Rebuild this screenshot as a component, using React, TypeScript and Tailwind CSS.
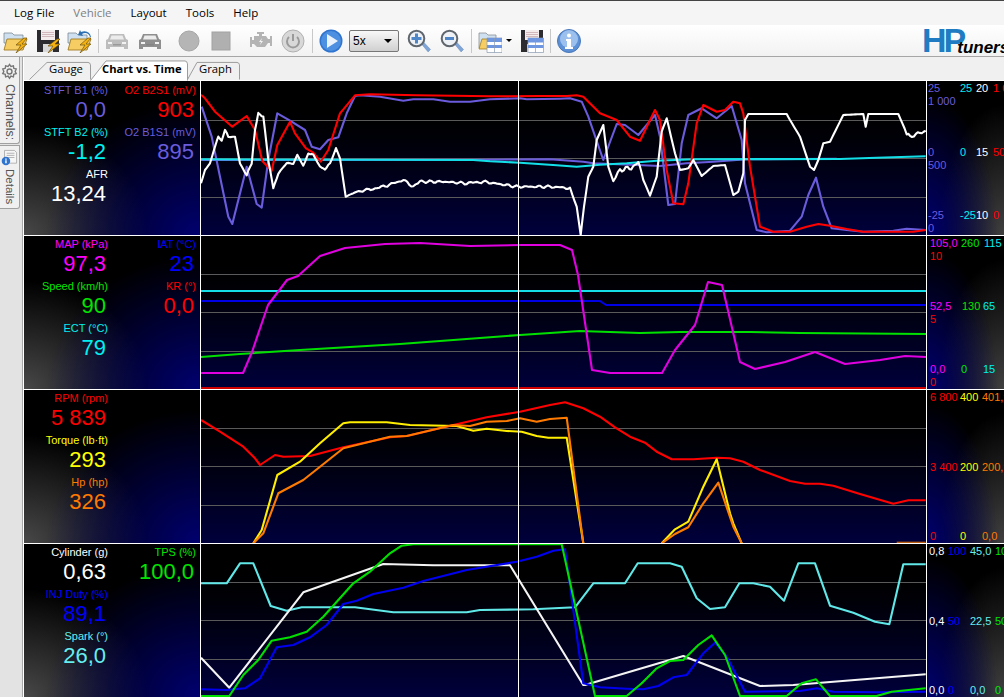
import React from 'react';

type Pt = [number, number];

// points were read off 3x crops, so they are divided back down here
const z = (ox: number, oy: number, pts: Pt[]): Pt[] => pts.map(([x, y]) => [ox + x / 3, oy + y / 3]);
const line = (pts: Pt[]) => pts.map(([x, y]) => `${x.toFixed(1)},${y.toFixed(1)}`).join(' ');

// the AFR trace is noisy, add a stable wobble
function rough(pts: Pt[]): Pt[] {
  const out: Pt[] = [];
  for (let i = 0; i < pts.length - 1; i++) {
    const [x0, y0] = pts[i];
    const [x1, y1] = pts[i + 1];
    const steps = Math.max(1, Math.round((x1 - x0) / 2));
    for (let s = 0; s < steps; s++) {
      const x = x0 + ((x1 - x0) * s) / steps;
      const y = y0 + ((y1 - y0) * s) / steps;
      let amp = 0;
      if (x > 346 && x < 572) amp = 1.4;
      else if (x > 215 && x < 340) amp = 0.7;
      else if (x > 610 && x < 640) amp = 2.2;
      else if (x > 905) amp = 1.6;
      out.push([x, y + amp * Math.sin(x * 1.7) * Math.cos(x * 0.9)]);
    }
  }
  out.push(pts[pts.length - 1]);
  return out;
}

const VIOLET = '#6a5cdc';
const row1 = [
  {
    c: VIOLET,
    p: [...z(200, 80, [[5, 80], [35, 170], [60, 290], [85, 410], [97, 432], [140, 260], [170, 372], [185, 383], [205, 240], [232, 100], [270, 122], [315, 150], [335, 200], [360, 208], [385, 180], [415, 172], [440, 100], [465, 48], [480, 46], [540, 50], [610, 62], [640, 58], [700, 58], [750, 65], [810, 65], [870, 58], [960, 55], [980, 58], [1080, 56]]),
      ...z(560, 80, [[30, 55], [65, 65], [85, 110], [130, 240], [170, 132], [195, 135], [235, 165], [285, 105], [300, 170], [325, 375], [345, 372], [365, 190], [385, 105], [425, 85], [470, 115], [515, 78], [545, 180], [555, 310], [590, 450], [620, 457], [690, 452], [725, 410], [745, 345], [768, 293], [790, 380], [815, 445], [860, 450], [910, 455], [1000, 452], [1040, 446], [1097, 450]])],
  },
  {
    c: VIOLET,
    p: [...z(200, 80, [[0, 240], [820, 239], [1050, 238], [1150, 245]]), ...z(560, 80, [[100, 250], [230, 255], [300, 258], [380, 250], [460, 245], [560, 238], [830, 236]])],
  },
  {
    c: '#12dfe8',
    p: [...z(200, 80, [[0, 238], [820, 240], [870, 244], [960, 248], [1070, 256], [1130, 260], [1200, 254]]), ...z(560, 80, [[200, 250], [290, 242], [400, 238], [840, 237], [950, 233], [1097, 229]])],
  },
  {
    c: '#ff0000',
    p: [...z(200, 80, [[3, 44], [15, 55], [45, 95], [97, 140], [140, 108], [165, 150], [187, 243], [215, 272], [232, 195], [270, 125], [285, 160], [318, 205], [340, 218], [362, 245], [385, 210], [420, 100], [465, 46], [510, 43], [650, 46], [870, 49], [1020, 48], [1100, 48]]), ...z(560, 80, [[50, 46], [70, 50], [120, 100], [170, 120], [210, 170], [240, 182], [285, 90], [300, 120], [320, 270], [340, 370], [370, 373], [385, 310], [410, 130], [430, 75], [470, 95], [495, 90], [520, 65], [540, 70], [550, 100], [570, 260], [600, 440], [640, 455], [690, 455], [740, 440], [775, 432], [810, 437], [860, 447], [910, 455], [1060, 455], [1097, 450]])],
  },
  {
    c: '#ffffff',
    p: rough([...z(200, 80, [[3, 310], [15, 270], [30, 250], [45, 200], [55, 170], [65, 182], [75, 150], [85, 170], [105, 170], [120, 250], [140, 285], [155, 250], [165, 150], [175, 100], [190, 110], [205, 240], [220, 325], [235, 280], [260, 250], [280, 250], [292, 225], [310, 258], [325, 220], [340, 225], [360, 260], [375, 268], [390, 250], [408, 205], [420, 235], [437, 350], [470, 335], [500, 330], [550, 320], [610, 300], [640, 320], [660, 305], [730, 305], [800, 310], [850, 305], [950, 320], [1050, 320], [1080, 322]]), ...z(560, 80, [[30, 325], [50, 380], [62, 465], [72, 380], [85, 290], [100, 260], [110, 180], [130, 135], [145, 260], [160, 305], [180, 270], [225, 260], [235, 240], [250, 300], [270, 347], [290, 290], [305, 155], [320, 115], [345, 220], [360, 270], [385, 265], [400, 240], [425, 288], [460, 258], [495, 255], [520, 345], [535, 335], [550, 280], [555, 120], [565, 102], [680, 102], [690, 120], [720, 170], [750, 260], [762, 270], [775, 240], [790, 190], [810, 185], [850, 105], [910, 102], [917, 140], [925, 102], [1015, 102], [1040, 160], [1050, 170], [1097, 152]])]),
  },
];

const row2 = [
  { c: '#14dfe8', p: [[201, 291], [926, 291]] as Pt[] },
  { c: '#0000e6', p: [[201, 301], [600, 301], [606, 305], [926, 305]] as Pt[] },
  { c: '#00e000', p: [[201, 357], [240, 354], [300, 350], [400, 344], [520, 335], [580, 331], [640, 333], [680, 332], [750, 332], [800, 333], [926, 334]] as Pt[] },
  { c: '#e000e0', p: [[201, 373], [243, 373], [252, 352], [268, 305], [287, 280], [298, 276], [320, 256], [345, 248], [385, 244], [420, 243], [470, 246], [520, 245], [560, 245], [572, 250], [578, 275], [592, 370], [610, 373], [662, 373], [675, 350], [695, 325], [708, 282], [722, 285], [740, 362], [755, 369], [785, 362], [815, 352], [845, 364], [880, 360], [905, 356], [926, 357]] as Pt[] },
  { c: '#d00000', p: [[201, 388], [926, 388]] as Pt[] },
];

const row3 = [
  { c: '#ff0000', p: [...z(200, 390, [[3, 90], [60, 125], [130, 170], [165, 205], [180, 225], [225, 195], [250, 200], [330, 198], [430, 172], [570, 142], [620, 138], [760, 105], [860, 82], [960, 65], [1050, 45], [1095, 37], [1150, 55]]), ...z(560, 390, [[120, 80], [165, 112], [210, 140], [255, 158], [290, 185], [335, 208], [400, 208], [470, 203], [510, 205], [550, 215], [600, 240], [690, 273], [735, 281], [780, 281], [820, 287], [900, 312], [1000, 341], [1045, 331], [1097, 331]])] },
  { c: '#ffee00', p: z(200, 390, [[160, 460], [185, 420], [205, 350], [232, 255], [300, 215], [360, 160], [430, 100], [450, 97], [510, 97], [560, 97], [630, 105], [770, 108], [820, 122], [860, 116], [920, 123], [965, 125], [1010, 138], [1045, 143], [1100, 143], [1150, 460]]) },
  { c: '#ff7b00', p: z(200, 390, [[160, 460], [190, 430], [235, 310], [310, 270], [360, 230], [430, 175], [570, 140], [620, 138], [760, 105], [810, 108], [860, 95], [920, 93], [960, 85], [1010, 95], [1050, 87], [1100, 83], [1150, 460]]) },
  { c: '#ffee00', p: z(560, 390, [[305, 460], [345, 418], [385, 395], [430, 290], [470, 208], [510, 370], [520, 400], [545, 460]]) },
  { c: '#ff7b00', p: z(560, 390, [[305, 460], [345, 432], [385, 412], [430, 340], [475, 278], [520, 410], [545, 460]]) },
  { c: '#b85c10', p: z(560, 390, [[1010, 458], [1097, 458]]) },
];

const row4 = [
  { c: '#60e8e8', p: [...z(200, 390, [[3, 580], [80, 580], [120, 520], [160, 520], [212, 648], [260, 662], [305, 652], [465, 652], [580, 667], [800, 667], [840, 660], [1000, 658], [1125, 652]]), ...z(560, 390, [[45, 652], [100, 580], [195, 580], [233, 520], [330, 520], [365, 530], [410, 625], [450, 657], [495, 652], [538, 580], [580, 580], [630, 590], [672, 632], [715, 520], [765, 520], [810, 647], [880, 668], [945, 695], [988, 703], [1030, 523], [1097, 523]])] },
  { c: '#f4f4f4', p: [...z(200, 390, [[3, 803], [88, 893], [310, 607], [550, 522], [700, 526], [930, 526], [1150, 885]]), ...z(560, 390, [[75, 885], [370, 798], [600, 888], [700, 885], [1097, 853]])] },
  { c: '#0000f0', p: [...z(200, 390, [[3, 898], [80, 900], [135, 895], [180, 865], [230, 772], [280, 765], [330, 742], [380, 705], [430, 642], [470, 632], [520, 612], [610, 593], [670, 573], [800, 540], [950, 515], [1010, 500], [1060, 482], [1095, 478], [1150, 880]]), ...z(560, 390, [[120, 892], [200, 896], [250, 898], [295, 888], [340, 862], [380, 855], [430, 790], [465, 758], [500, 800], [555, 905], [720, 903], [770, 895], [820, 905], [950, 907], [1097, 905]])] },
  { c: '#00e000', p: [...z(200, 390, [[3, 918], [88, 918], [130, 855], [175, 810], [215, 752], [270, 742], [320, 725], [370, 680], [460, 580], [510, 545], [570, 490], [605, 467], [640, 463], [1085, 463]]), ...z(560, 390, [[105, 918], [200, 918], [245, 880], [290, 835], [330, 813], [370, 810], [415, 765], [455, 736], [495, 795], [540, 918], [680, 918], [725, 880], [768, 868], [810, 918], [950, 918], [995, 905], [1097, 895]])] },
];

function Chart({ top, h, grid, traces }: { top: number; h: number; grid: number[]; traces: { c: string; p: Pt[] }[] }) {
  return (
    <div className="w-[726px] shrink-0 bg-gradient-to-b from-black to-[#00003c]">
      <svg className="block" width={725} height={h} viewBox={`201 ${top} 725 ${h}`}>
        {grid.map((y) => (
          <line key={y} x1={201} x2={926} y1={y + 0.5} y2={y + 0.5} stroke="#5a5a5a" strokeWidth={1} />
        ))}
        {traces.map((t, i) => (
          <polyline key={i} points={line(t.p)} fill="none" stroke={t.c} strokeWidth={2.1} strokeLinejoin="round" />
        ))}
        <line x1={518.5} x2={518.5} y1={top} y2={top + h} stroke="#fff" strokeWidth={1} />
      </svg>
    </div>
  );
}

function Reading({ label, value, color }: { label: string; value: string; color: string }) {
  return (
    <div className="mb-[2px] flex flex-col items-end whitespace-nowrap" style={{ color }}>
      <span className="h-[16px] text-[11px] leading-[16px]">{label}</span>
      <span className="h-[24px] pr-[2px] text-[22px] leading-[24px]">{value}</span>
    </div>
  );
}

const panelBg =
  'bg-black bg-[radial-gradient(ellipse_at_100%_100%,#000070,transparent_62%),radial-gradient(ellipse_at_0%_100%,#484848,transparent_50%)]';
const axisBg =
  'bg-black bg-[radial-gradient(ellipse_at_0%_100%,#000070,transparent_65%),radial-gradient(ellipse_at_100%_100%,#404040,transparent_60%)]';

function Readings({ left, right, first }: { left: [string, string, string][]; right: [string, string, string][]; first?: boolean }) {
  return (
    <div className={`flex w-[177px] shrink-0 ${panelBg} ${first ? 'pt-px' : ''}`}>
      <div className="w-[84px]">
        {left.map(([l, v, c]) => (
          <Reading key={l} label={l} value={v} color={c} />
        ))}
      </div>
      <div className="w-[88px]">
        {right.map(([l, v, c]) => (
          <Reading key={l} label={l} value={v} color={c} />
        ))}
      </div>
    </div>
  );
}

// one line of an axis: [text, colour, width]
function AxisLine({ items }: { items: [string, string, string][] }) {
  return (
    <div className="flex h-[13px] whitespace-nowrap text-[11px] leading-[13px]">
      {items.map(([t, c, w], i) => (
        <span key={i} className={`shrink-0 ${w}`} style={{ color: c }}>
          {t}
        </span>
      ))}
    </div>
  );
}

function Axis({ groups, pad }: { groups: [string, string, string][][][]; pad: string }) {
  return (
    <div className={`flex w-[77px] shrink-0 flex-col justify-between overflow-hidden pt-px ${pad} ${axisBg}`}>
      {groups.map((g, i) => (
        <div key={i}>
          {g.map((items, j) => (
            <AxisLine key={j} items={items} />
          ))}
        </div>
      ))}
    </div>
  );
}

function Row({ children, h }: { children: React.ReactNode; h: string }) {
  return <div className={`flex ${h} divide-x divide-white border-b border-white last:border-b-0`}>{children}</div>;
}

function OpenFolder({ back = false }: { back?: boolean }) {
  return (
    <svg width={25} height={24} viewBox="0 0 25 24">
      <path d="M1 4h8l2 2h9v8H1z" fill="#cfe0f0" stroke="#7f8a94" strokeWidth={0.8} />
      <path d="M1 21 L4 10h20l-4 11z" fill="#f6cd62" stroke="#a07c22" strokeWidth={0.9} />
      <path d="M21 9l-8 7h5l-5 8 11-9h-5l5-6z" fill="#f5b10f" stroke="#6d5210" strokeWidth={0.7} />
      {back && <path d="M23 8c-1-4-5-5-8-3l1 2-5-1 2-5 1 2c5-2 9 0 10 5z" fill="#2c6fb3" />}
    </svg>
  );
}

function Disk({ table = false }: { table?: boolean }) {
  return (
    <svg width={24} height={24} viewBox="0 0 24 24">
      <path d="M1 1h22v22H1z" fill="#2b2b30" />
      <path d="M5 1h14v10H5z" fill="#f4ecec" />
      <path d="M6 3.5h12M6 5.5h12M6 7.5h12" stroke="#c9a9b0" strokeWidth={0.8} />
      <path d="M7 15h10v8H7z" fill="#d8d8d8" />
      {table ? (
        <g>
          <path d="M8 9h15.5v14.5H8z" fill="#fff" stroke="#8a9ab0" strokeWidth={0.7} />
          <path d="M8 9h15.5v4.5H8zM8 16h15.5v3H8z" fill="#6f96e0" />
          <path d="M15.5 9v14.5" stroke="#8a9ab0" strokeWidth={0.7} />
        </g>
      ) : (
        <path d="M21 10l-9 7h5l-5 7 12-9h-5l5-5z" fill="#f5b10f" stroke="#6d5210" strokeWidth={0.7} />
      )}
    </svg>
  );
}

function Car({ color }: { color: string }) {
  return (
    <svg width={24} height={24} viewBox="0 0 24 24">
      <path d="M5 5h14l2 5 2 1v9h-4v-2H5v2H1v-9l2-1z" fill={color} />
      <path d="M6.5 6.5h11l1.5 4H5z" fill="#ececec" />
      <path d="M3 13h4v2H3zM17 13h4v2h-4z" fill="#f2f2f2" />
      <path d="M8 15h8v1.5H8z" fill="#777" opacity={0.5} />
    </svg>
  );
}

function Magnifier({ minus = false }: { minus?: boolean }) {
  return (
    <svg width={24} height={24} viewBox="0 0 24 24">
      <path d="M14.5 15l2-2 7 7.5-2.4 2.4z" fill="#7fa4d8" stroke="#6a8ab8" strokeWidth={0.5} />
      <circle cx={9.5} cy={9.5} r={7.8} fill="#eef2f6" stroke="#5f666e" strokeWidth={2} />
      <path d={minus ? 'M5 8h9v3H5z' : 'M8 4.5h3V8h3.5v3H11v3.5H8V11H4.5V8H8z'} fill="#4f86c8" />
    </svg>
  );
}

function FolderTable() {
  return (
    <svg width={24} height={24} viewBox="0 0 24 24">
      <path d="M1 4h7l2 2h8v13H1z" fill="#cfe0f0" stroke="#8a8f94" strokeWidth={0.8} />
      <path d="M1 20l3-10h9v10z" fill="#f6cd62" stroke="#a07c22" strokeWidth={0.8} />
      <path d="M9 9h15v14.5H9z" fill="#fff" stroke="#8a9ab0" strokeWidth={0.7} />
      <path d="M9 9h15v4H9zM9 16h15v3H9z" fill="#6f96e0" />
      <path d="M16.5 9v14.5" stroke="#8a9ab0" strokeWidth={0.7} />
    </svg>
  );
}

function Toolbar() {
  return (
    <div className="flex h-[32px] items-center overflow-hidden border-b border-[#a6a6a6] bg-gradient-to-b from-white to-[#f2f2f2] pl-[3px] *:shrink-0">
      <OpenFolder />
      <div className="ml-[8px]"><Disk /></div>
      <div className="ml-[7px]"><OpenFolder back /></div>
      <div className="ml-[6px] h-[24px] w-px bg-[#c8c8c8]" />
      <div className="ml-[6px]"><Car color="#bdbdbd" /></div>
      <div className="ml-[9px]"><Car color="#8f8f8f" /></div>
      <div className="ml-[15px]">
        <svg width={24} height={24} viewBox="0 0 24 24"><circle cx={12} cy={12} r={10} fill="#b5b5b5" stroke="#a6a6a6" /></svg>
      </div>
      <div className="ml-[8px]">
        <svg width={24} height={24} viewBox="0 0 24 24"><rect x={3} y={3} width={18} height={18} fill="#b0b0b0" stroke="#a2a2a2" /></svg>
      </div>
      <div className="ml-[16px]">
        <svg width={24} height={24} viewBox="0 0 24 24">
          <path d="M8 3h7v2h-2v2h4l2 3h2V7h2v10h-2v-3h-2l-3 4H8l-3-3H3v3H1V8h2v3h2V7h5V5H8z" fill="#b4b4b4" />
          <path d="M13 9l-3 4h2l-1 3 3-4h-2z" fill="#f4f4f4" />
        </svg>
      </div>
      <div className="ml-[8px]">
        <svg width={24} height={24} viewBox="0 0 24 24">
          <circle cx={12} cy={12} r={11} fill="#d8d8d8" stroke="#b0b0b0" />
          <path d="M8 8a6 6 0 1 0 8 0" fill="none" stroke="#9a9a9a" strokeWidth={2} />
          <path d="M12 5v7" stroke="#9a9a9a" strokeWidth={2} />
        </svg>
      </div>
      <div className="ml-[7px] h-[24px] w-px bg-[#c8c8c8]" />
      <div className="ml-[6px]">
        <svg width={24} height={24} viewBox="0 0 24 24">
          <circle cx={12} cy={12} r={11.5} fill="#2f74cf" />
          <circle cx={12} cy={12} r={10} fill="#4d8fe0" />
          <path d="M8 5l11 7-11 7z" fill="#eaf2fb" />
        </svg>
      </div>
      <div className="ml-[6px] flex h-[22px] w-[50px] items-center justify-between rounded-[2px] border border-[#777] bg-gradient-to-b from-[#f8f8f8] to-[#d0d0d0] px-[3px] text-[12px] text-black">
        <span>5x</span>
        <span className="mr-[3px] h-0 w-0 border-x-[4px] border-t-[4px] border-x-transparent border-t-black" />
      </div>
      <div className="ml-[8px]"><Magnifier /></div>
      <div className="ml-[9px]"><Magnifier minus /></div>
      <div className="ml-[7px] h-[24px] w-px bg-[#c8c8c8]" />
      <div className="ml-[6px]"><FolderTable /></div>
      <span className="ml-[4px] h-0 w-0 border-x-[3px] border-t-[3px] border-x-transparent border-t-black" />
      <div className="ml-[8px]"><Disk table /></div>
      <div className="ml-[6px] h-[24px] w-px bg-[#c8c8c8]" />
      <div className="ml-[6px]">
        <svg width={24} height={24} viewBox="0 0 24 24">
          <circle cx={12} cy={12} r={11.5} fill="#5b8fd6" stroke="#4a78b8" />
          <circle cx={12} cy={10} r={9} fill="#9cc0ee" />
          <circle cx={12} cy={6.5} r={2} fill="#fff" />
          <path d="M9 10h5v8h2v2H8v-2h2v-6H9z" fill="#fff" />
        </svg>
      </div>
      <div className="ml-[341px] flex items-end">
        <span className="text-[34px] font-bold leading-[25px] tracking-[-3px] text-[#1f7cc2]">HP</span>
        <span className="-mb-[1px] -ml-[6px] text-[17px] font-bold italic leading-[13px] text-black">tuners</span>
      </div>
    </div>
  );
}

function Tab({ label, width, path, active, pad }: { label: string; width: string; path: string; active?: boolean; pad: string }) {
  return (
    <div className={`relative ${width} ${active ? 'z-10 -mb-px h-[21px] text-[11.2px] font-bold leading-[18px]' : 'h-[19px] text-[11.3px] leading-[16px]'} shrink-0 text-black`}>
      <svg className="absolute inset-0 h-full w-full" preserveAspectRatio="none" viewBox={active ? '0 0 98 22' : `0 0 ${label === 'Gauge' ? 62 : 53} 20`}>
        <path d={path} fill={active ? '#fff' : '#f0f0f0'} stroke="#9a9a9a" strokeWidth={1} />
      </svg>
      <span className="relative block whitespace-nowrap" style={{ paddingLeft: pad }}>{label}</span>
    </div>
  );
}

function Sidebar() {
  return (
    <div className="h-[640px] w-[24px] shrink-0 border-r border-white">
      <div className="h-full w-[23px] border-r border-[#a8a8a8] bg-[#e3e3e3]">
        <div className="flex h-[87px] w-[20px] flex-col items-center rounded-br-[3px] border-b border-r border-[#a0a0a0] bg-[#f0f0f0] pt-[6px]">
          <svg width={17} height={17} viewBox="0 0 24 24" fill="none" stroke="#777" strokeWidth={2}>
            <circle cx={12} cy={12} r={3.5} />
            <path d="M12 2l2 3 3.5-1 .5 3.5 3.5 1-1.5 3.5 1.5 3-3.5 1-.5 3.5-3.5-1-2 3-2-3-3.5 1-.5-3.5-3.5-1 1.5-3-1.5-3.5 3.5-1 .5-3.5L10 5z" />
          </svg>
          <span className="mt-[4px] text-[12.5px] leading-[18px] text-[#555] [writing-mode:vertical-rl]">Channels:</span>
        </div>
        <div className="mt-[1px] flex h-[64px] w-[20px] flex-col items-center rounded-br-[3px] border-y border-r border-[#a0a0a0] bg-[#f0f0f0] pt-[3px]">
          <svg width={17} height={17} viewBox="0 0 24 24">
            <path d="M5 2h14l3 3v15H5z" fill="#f6f6f6" stroke="#999" />
            <path d="M8 6h11M8 9h11M8 12h11" stroke="#999" />
            <circle cx={7} cy={17} r={6} fill="#2f74cf" />
            <path d="M6 13.5h2v1.5H6zM6 16h2v4H6z" fill="#fff" />
          </svg>
          <span className="mt-[3px] text-[11.5px] leading-[18px] text-[#555] [writing-mode:vertical-rl]">Details</span>
        </div>
      </div>
    </div>
  );
}

export default function App() {
  const v = '#6a5cdc';
  const cy = '#00f0f0';
  const r = '#ff0000';
  const w = '#ffffff';
  const m = '#ff00ff';
  const g = '#00e600';
  const b = '#0000ff';
  const y = '#ffff00';
  const o = '#ff7a00';
  const c2 = '#66eeee';

  return (
    <div className="h-[697px] w-[1004px] overflow-hidden bg-[#f0f0f0] font-['Liberation_Sans',Arial,sans-serif]">
      <div className="h-px bg-[#444]" />
      <div className="flex h-[24px] items-center gap-[19px] bg-[#f5f5f5] pl-[14px] font-['Open_Sans',sans-serif] text-[11.5px] text-black">
        <span>Log File</span>
        <span className="text-[#808080]">Vehicle</span>
        <span>Layout</span>
        <span>Tools</span>
        <span>Help</span>
      </div>
      <Toolbar />
      <div className="flex">
        <Sidebar />
        <div className="w-[980px]">
          <div className="flex h-[23px] items-end bg-[#f0f0f0] pl-[5px] font-['Open_Sans',sans-serif]">
            <Tab label="Gauge" width="w-[62px]" pad="20px" path="M0.5 19.5L18 1.5H59Q61 1.5 61.5 4V19.5" />
            <div className="-ml-px">
              <Tab label="Chart vs. Time" width="w-[98px]" active pad="12px" path="M0.5 21.5L16 1H95Q97 1 97.5 4V21.5" />
            </div>
            <div className="-ml-px">
              <Tab label="Graph" width="w-[53px]" pad="12px" path="M0.5 19.5L10 1.5H50Q52 1.5 52.5 4V19.5" />
            </div>
          </div>
          <div className="border-t border-white">
            <Row h="h-[155px]">
              <Readings
                first
                left={[['STFT B1 (%)', '0,0', v], ['STFT B2 (%)', '-1,2', cy], ['AFR', '13,24', w]]}
                right={[['O2 B2S1 (mV)', '903', r], ['O2 B1S1 (mV)', '895', v]]}
              />
              <Chart top={81} h={154} grid={[120, 158, 197]} traces={row1} />
              <Axis
                pad="pl-px"
                groups={[
                  [[['25', v, 'w-[32px]'], ['25', cy, 'w-[16px]'], ['20', w, 'w-[17px]'], ['1 000', r, '']], [['1 000', v, '']]],
                  [[['0', v, 'w-[32px]'], ['0', cy, 'w-[16px]'], ['15', w, 'w-[17px]'], ['500', r, '']], [['500', v, '']]],
                  [[['-25', v, 'w-[32px]'], ['-25', cy, 'w-[16px]'], ['10', w, 'w-[17px]'], ['0', r, '']], [['0', v, '']]],
                ]}
              />
            </Row>
            <Row h="h-[154px]">
              <Readings
                left={[['MAP (kPa)', '97,3', m], ['Speed (km/h)', '90', g], ['ECT (°C)', '79', cy]]}
                right={[['IAT (°C)', '23', b], ['KR (°)', '0,0', r]]}
              />
              <Chart top={236} h={153} grid={[274, 312, 351]} traces={row2} />
              <Axis
                pad="pl-[3px]"
                groups={[
                  [[['105,0', m, 'w-[31px]'], ['260', g, 'w-[23px]'], ['115', cy, '']], [['10', r, '']]],
                  [[['52,5', m, 'w-[32px]'], ['130', g, 'w-[21px]'], ['65', cy, '']], [['5', r, '']]],
                  [[['0,0', m, 'w-[31px]'], ['0', g, 'w-[22px]'], ['15', cy, '']], [['0', r, '']]],
                ]}
              />
            </Row>
            <Row h="h-[154px]">
              <Readings
                left={[['RPM (rpm)', '5 839', r], ['Torque (lb·ft)', '293', y], ['Hp (hp)', '326', o]]}
                right={[]}
              />
              <Chart top={390} h={153} grid={[428, 466, 505]} traces={row3} />
              <Axis
                pad="pl-[3px]"
                groups={[
                  [[['6 800', r, 'w-[30px]'], ['400', y, 'w-[22px]'], ['401,9', o, '']]],
                  [[['3 400', r, 'w-[30px]'], ['200', y, 'w-[22px]'], ['200,9', o, '']]],
                  [[['0', r, 'w-[30px]'], ['0', y, 'w-[22px]'], ['0,0', o, '']]],
                ]}
              />
            </Row>
            <Row h="h-[153px]">
              <Readings
                left={[['Cylinder (g)', '0,63', w], ['INJ Duty (%)', '89,1', b], ['Spark (°)', '26,0', c2]]}
                right={[['TPS (%)', '100,0', g]]}
              />
              <Chart top={544} h={153} grid={[582, 620, 659]} traces={row4} />
              <Axis
                pad="pl-[2px]"
                groups={[
                  [[['0,8', w, 'w-[19px]'], ['100', b, 'w-[22px]'], ['45,0', c2, 'w-[25px]'], ['100', g, '']]],
                  [[['0,4', w, 'w-[19px]'], ['50', b, 'w-[22px]'], ['22,5', c2, 'w-[25px]'], ['50', g, '']]],
                  [[['0,0', w, 'w-[19px]'], ['0', b, 'w-[22px]'], ['0,0', c2, 'w-[25px]'], ['0', g, '']]],
                ]}
              />
            </Row>
          </div>
        </div>
      </div>
    </div>
  );
}
